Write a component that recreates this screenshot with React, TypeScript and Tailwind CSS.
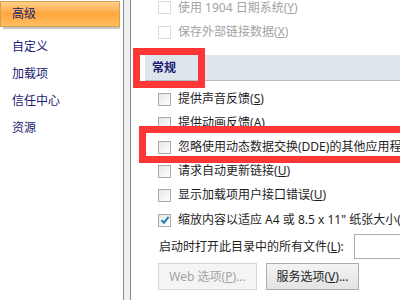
import React from 'react';

const font = { fontFamily: '"Noto Sans", "Noto Sans CJK SC", sans-serif' };

const navItems = ['自定义', '加载项', '信任中心', '资源'];

function Checkbox({ checked = false, disabled = false }: { checked?: boolean; disabled?: boolean }) {
  return (
    <span
      className={
        'relative flex h-[13px] w-[13px] shrink-0 items-center justify-center border ' +
        (disabled
          ? 'border-[#d9d9d9] bg-white'
          : 'border-[#a9a9a9] bg-gradient-to-br from-[#e6e6e6] to-[#ffffff]')
      }
    >
      {checked && (
        <svg width="10" height="10" viewBox="0 0 10 10">
          <path d="M1.5 5.2 L4 7.8 L8.6 1.8" fill="none" stroke="#1f7fb5" strokeWidth="2" />
        </svg>
      )}
    </span>
  );
}

function Row({
  label,
  hotkey,
  tail,
  checked,
  disabled,
  className = 'h-[24px]',
}: {
  label: string;
  hotkey: string;
  tail?: string;
  checked?: boolean;
  disabled?: boolean;
  className?: string;
}) {
  return (
    <div className={'flex items-center gap-[7px] pl-[27px] ' + className}>
      <Checkbox checked={checked} disabled={disabled} />
      <span
        className={
          'whitespace-nowrap text-[12px] leading-none ' + (disabled ? 'text-[#a3a3a3]' : 'text-[#1e1e1e]')
        }
      >
        {label}(<span className="underline">{hotkey}</span>){tail}
      </span>
    </div>
  );
}

export default function App() {
  return (
    <div className="relative flex h-[300px] w-[400px] overflow-hidden bg-white" style={font}>
      {/* Sidebar */}
      <div className="w-[123px] shrink-0 pt-[1px]">
        <div className="relative">
          <div className="flex h-[26px] w-[120px] items-center border border-[#d9a24a] bg-gradient-to-b from-[#ffd08a] via-[#ffa63c] to-[#ffbf60] pl-[11px] text-[12px] leading-none text-[#1c1c70]">
            高级
          </div>
          <div className="ml-[3px] h-[2px] w-[117px] bg-[#c8c8c8]" />
        </div>
        <div className="flex flex-col pt-[4px]">
          {navItems.map((n) => (
            <div key={n} className="flex h-[27px] items-center pl-[12px] text-[12px] leading-none text-[#1c1c70]">
              {n}
            </div>
          ))}
        </div>
      </div>

      {/* Splitter */}
      <div className="w-[8px] shrink-0 border-x border-[#868a94] bg-[#f0f0f0]" />

      {/* Content */}
      <div className="flex min-w-0 flex-1 flex-col">
        <div className="-mt-[5px] flex flex-col">
          <Row label="使用 1904 日期系统" hotkey="Y" disabled className="h-[25px]" />
          <Row label="保存外部链接数据" hotkey="X" disabled />
        </div>

        <div className="ml-[14px] mt-[11px] flex h-[26px] items-center border-b border-[#b5bcc6] bg-[#dde5ed] pl-[7px]">
          <span className="text-[12px] font-bold leading-none text-[#1c1c70]">常规</span>
        </div>

        <div className="mt-[6px] flex flex-col">
          <Row label="提供声音反馈" hotkey="S" />
          <Row label="提供动画反馈" hotkey="A" />
          <Row label="忽略使用动态数据交换(DDE)的其他应用程序" hotkey="O" />
          <Row label="请求自动更新链接" hotkey="U" />
          <Row label="显示加载项用户接口错误" hotkey="U" />
          <Row label={'缩放内容以适应 A4 或 8.5 x 11" 纸张大小'} hotkey="A" checked className="h-[26px]" />
        </div>

        <div className="mt-[1px] flex h-[25px] items-center pl-[28px]">
          <span className="w-[195px] shrink-0 whitespace-nowrap text-[12px] leading-none text-[#1e1e1e]">
            启动时打开此目录中的所有文件(<span className="underline">L</span>):
          </span>
          <div className="h-[25px] w-[80px] shrink-0 border border-[#abadb3] bg-white" />
        </div>

        <div className="mt-[4px] flex gap-[9px] pl-[27px]">
          <div className="flex h-[27px] w-[99px] items-center justify-center border border-[#d5d5d5] bg-[#f4f4f4] text-[12px] leading-none text-[#a3a3a3]">
            Web 选项(<span className="underline">P</span>)...
          </div>
          <div className="flex h-[27px] w-[93px] items-center justify-center border border-[#acacac] bg-gradient-to-b from-[#f4f4f4] to-[#e3e3e3] text-[12px] leading-none text-[#1e1e1e]">
            服务选项(<span className="underline">V</span>)...
          </div>
        </div>
      </div>

      {/* Red annotation boxes */}
      <div className="pointer-events-none absolute left-[133px] top-[48px] h-[40px] w-[72px] border-[7px] border-[#ff3636]" />
      <div className="pointer-events-none absolute left-[139px] top-[126px] h-[37px] w-[280px] border-[7px] border-[#ff3636]" />
    </div>
  );
}
